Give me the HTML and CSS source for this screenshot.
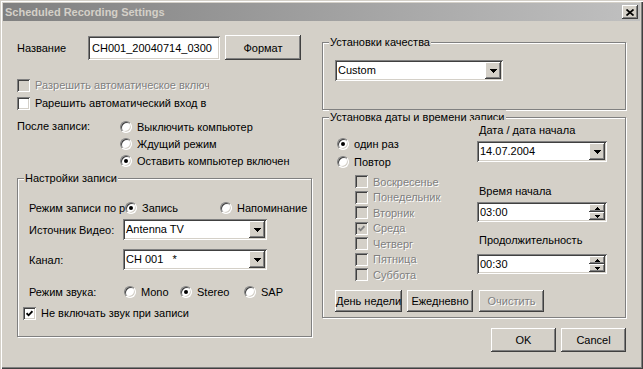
FILE: index.html
```html
<!DOCTYPE html>
<html lang="ru">
<head>
<meta charset="utf-8">
<title>Scheduled Recording Settings</title>
<link rel="stylesheet" href="styles.css">
</head>
<body>
<div class="window">
  <div class="titlebar">
    <span class="title">Scheduled Recording Settings</span>
    <span class="close raised"><svg width="8" height="7" viewBox="0 0 8 7"><path d="M0.5 0.5 L7.5 6.5 M7.5 0.5 L0.5 6.5" stroke="#000" stroke-width="1.7" fill="none"/></svg></span>
  </div>
  <div class="content">
    <div class="col-left">
      <div class="name-row">
        <span class="name-label">Название</span>
        <div class="field name-field">CH001_20040714_0300</div>
        <div class="btn raised format-btn">Формат</div>
      </div>
      <div class="check disabled first-check"><span class="box"></span><span class="clip auto-clip">Разрешить автоматическое включение</span></div>
      <div class="check second-check"><span class="box"></span><span class="clip auto-clip">Рарешить автоматический вход в</span></div>
      <div class="after">
        <span class="after-label">После записи:</span>
        <div class="after-options">
          <div class="radio"><span class="rb"></span>Выключить компьютер</div>
          <div class="radio"><span class="rb"></span>Ждущий режим</div>
          <div class="radio"><span class="rb on"></span>Оставить компьютер включен</div>
        </div>
      </div>
      <div class="group rec-group">
        <span class="group-title">Настройки записи</span>
        <div class="mode-row">
          <span class="clip mode-label">Режим записи по расписанию</span>
          <div class="radio w95"><span class="rb on"></span>Запись</div>
          <div class="radio"><span class="rb"></span>Напоминание</div>
        </div>
        <div class="combo-row">
          <span class="row-label">Источник Видео:</span>
          <div class="field combo rec-combo"><span class="combo-text">Antenna TV</span><span class="drop raised"><svg width="7" height="4" viewBox="0 0 7 4" shape-rendering="crispEdges"><path d="M0 0h7v1H6v1H5v1H4v1H3V3H2V2H1V1H0z" fill="#000"/></svg></span></div>
        </div>
        <div class="combo-row second-combo">
          <span class="row-label">Канал:</span>
          <div class="field combo rec-combo"><span class="combo-text">CH 001 &nbsp;&nbsp;*</span><span class="drop raised"><svg width="7" height="4" viewBox="0 0 7 4" shape-rendering="crispEdges"><path d="M0 0h7v1H6v1H5v1H4v1H3V3H2V2H1V1H0z" fill="#000"/></svg></span></div>
        </div>
        <div class="sound-row">
          <span class="sound-label">Режим звука:</span>
          <div class="radio w56"><span class="rb"></span>Mono</div>
          <div class="radio w64"><span class="rb on"></span>Stereo</div>
          <div class="radio"><span class="rb"></span>SAP</div>
        </div>
        <div class="check mute"><span class="box"><svg width="7" height="7" viewBox="0 0 7 7"><polyline points="0.6,3.2 2.6,5.3 6.4,1.2" stroke="#000" stroke-width="1.8" fill="none"/></svg></span>Не включать звук при записи</div>
      </div>
    </div>
    <div class="col-right">
      <div class="group quality-group">
        <span class="group-title">Установки качества</span>
        <div class="field combo quality-combo"><span class="combo-text">Custom</span><span class="drop raised"><svg width="7" height="4" viewBox="0 0 7 4" shape-rendering="crispEdges"><path d="M0 0h7v1H6v1H5v1H4v1H3V3H2V2H1V1H0z" fill="#000"/></svg></span></div>
      </div>
      <div class="group date-group">
        <span class="group-title">Установка даты и времени записи</span>
        <div class="date-top">
          <div class="date-left">
            <div class="radio r18"><span class="rb on"></span>один раз</div>
            <div class="radio r18"><span class="rb"></span>Повтор</div>
            <div class="days">
              <div class="check disabled day"><span class="box"></span>Воскресенье</div>
              <div class="check disabled day"><span class="box"></span>Понедельник</div>
              <div class="check disabled day"><span class="box"></span>Вторник</div>
              <div class="check disabled day"><span class="box"><svg width="7" height="7" viewBox="0 0 7 7"><polyline points="0.6,3.2 2.6,5.3 6.4,1.2" stroke="#808080" stroke-width="1.8" fill="none"/></svg></span>Среда</div>
              <div class="check disabled day"><span class="box"></span>Четверг</div>
              <div class="check disabled day"><span class="box"></span>Пятница</div>
              <div class="check disabled day"><span class="box"></span>Суббота</div>
            </div>
          </div>
          <div class="date-right">
            <div class="date-label">Дата / дата начала</div>
            <div class="field combo date-combo"><span class="combo-text">14.07.2004</span><span class="drop raised"><svg width="7" height="4" viewBox="0 0 7 4" shape-rendering="crispEdges"><path d="M0 0h7v1H6v1H5v1H4v1H3V3H2V2H1V1H0z" fill="#000"/></svg></span></div>
            <div class="time-label">Время начала</div>
            <div class="field spin start-spin"><span class="combo-text">03:00</span><span class="spin-btns"><span class="spin-btn raised"><svg width="5" height="3" viewBox="0 0 5 3" shape-rendering="crispEdges"><path d="M2 0h1v1h1v1h1v1H0V2h1V1h1z" fill="#000"/></svg></span><span class="spin-btn raised"><svg width="5" height="3" viewBox="0 0 5 3" shape-rendering="crispEdges"><path d="M0 0h5v1H4v1H3v1H2V2H1V1H0z" fill="#000"/></svg></span></span></div>
            <div class="dur-label">Продолжительность</div>
            <div class="field spin dur-spin"><span class="combo-text">00:30</span><span class="spin-btns"><span class="spin-btn raised"><svg width="5" height="3" viewBox="0 0 5 3" shape-rendering="crispEdges"><path d="M2 0h1v1h1v1h1v1H0V2h1V1h1z" fill="#000"/></svg></span><span class="spin-btn raised"><svg width="5" height="3" viewBox="0 0 5 3" shape-rendering="crispEdges"><path d="M0 0h5v1H4v1H3v1H2V2H1V1H0z" fill="#000"/></svg></span></span></div>
          </div>
        </div>
        <div class="day-buttons">
          <div class="btn raised b-week">День недели</div>
          <div class="btn raised b-daily">Ежедневно</div>
          <div class="btn raised b-clear disabled-text">Очистить</div>
        </div>
      </div>
      <div class="dialog-buttons">
        <div class="btn raised b-main">OK</div>
        <div class="btn raised b-main">Cancel</div>
      </div>
    </div>
  </div>
</div>
</body>
</html>
```

FILE: styles.css
```css
* { box-sizing: border-box; }
html, body { margin: 0; padding: 0; }
body {
  width: 643px; height: 369px; overflow: hidden;
  background: #d4d0c8;
  font-family: "Liberation Sans", Arial, sans-serif;
  font-size: 11px; color: #000;
}
.window {
  width: 643px; height: 369px; padding: 3px;
  background: #d4d0c8;
  box-shadow: inset 1px 1px 0 #d4d0c8, inset 2px 2px 0 #fff, inset -1px -1px 0 #404040, inset -2px -2px 0 #808080;
}
.titlebar {
  height: 18px; display: flex; align-items: center;
  padding: 0 2px 0 2px;
  background: linear-gradient(90deg, #808080, #c0c0c0);
}
.title { font-weight: bold; color: #d4d0c8; margin-left: 0; }
.close {
  margin-left: auto; width: 16px; height: 14px;
  display: flex; align-items: center; justify-content: center;
}
.raised {
  background: #d4d0c8;
  box-shadow: inset -1px -1px 0 #404040, inset 1px 1px 0 #fff, inset -2px -2px 0 #808080, inset 2px 2px 0 #d4d0c8;
}
.field {
  background: #fff;
  box-shadow: inset 1px 1px 0 #808080, inset -1px -1px 0 #fff, inset 2px 2px 0 #404040, inset -2px -2px 0 #d4d0c8;
}
.btn {
  display: flex; align-items: center; justify-content: center;
  white-space: nowrap; overflow: hidden;
}
.disabled-text, .disabled { color: #808080; text-shadow: 1px 1px 0 #fff; }

.content { display: flex; gap: 10px; padding: 14px 14px 0 14px; }
.col-left { width: 295px; flex: none; }
.col-right { width: 304px; flex: none; padding-top: 7px; }

.name-row { display: flex; align-items: center; height: 25px; }
.name-label { width: 71px; }
.name-field { width: 132px; height: 24px; line-height: 24px; padding: 0 4px; }
.format-btn { width: 76px; height: 25px; margin-left: 5px; }

.check { display: flex; align-items: center; height: 16px; white-space: nowrap; }
.box {
  width: 13px; height: 13px; flex: none; margin-right: 5px;
  display: flex; align-items: center; justify-content: center;
  background: #fff;
  box-shadow: inset 1px 1px 0 #808080, inset -1px -1px 0 #fff, inset 2px 2px 0 #404040, inset -2px -2px 0 #d4d0c8;
}
.disabled .box { background: #d4d0c8; }
.first-check { margin-top: 17px; }
.second-check { margin-top: 2px; }
.clip { white-space: nowrap; overflow: hidden; display: block; }
.auto-clip { width: 174px; }

.after { display: flex; margin-top: 7px; }
.after-label { width: 103px; line-height: 17px; }
.radio { display: flex; align-items: center; height: 17px; white-space: nowrap; }
.rb {
  width: 12px; height: 12px; flex: none; border-radius: 50%;
  margin-right: 5px; position: relative;
  border: 1px solid; border-color: #808080 #fff #fff #808080;
  background: #fff;
  box-shadow: inset 1px 1px 0 #404040, inset -1px -1px 0 #d4d0c8;
}
.rb.on::after {
  content: ""; position: absolute; left: 3px; top: 3px;
  width: 4px; height: 4px; border-radius: 50%; background: #000;
}

.group {
  position: relative;
  border: 1px solid #808080;
  box-shadow: 1px 1px 0 #fff, inset 1px 1px 0 #fff;
}
.group-title {
  position: absolute; top: -8px; left: 6px;
  padding: 0 1px; line-height: 14px; background: #d4d0c8;
  white-space: nowrap;
}
.rec-group { margin-top: 9px; height: 159px; padding: 21px 0 0 11px; }
.mode-row { display: flex; align-items: center; height: 16px; }
.mode-label { width: 96px; }
.w95 { width: 95px; }
.w56 { width: 56px; }
.w64 { width: 64px; }
.combo-row { display: flex; align-items: center; height: 21px; margin-top: 3px; }
.second-combo { margin-top: 9px; }
.row-label { width: 94px; }
.combo { display: flex; align-items: stretch; height: 21px; padding: 2px; }
.combo-text { flex: 1; padding-left: 1px; line-height: 17px; white-space: pre; }
.drop { width: 16px; height: 17px; display: flex; align-items: center; justify-content: center; }
.rec-combo { width: 144px; }
.sound-row { display: flex; align-items: center; height: 16px; margin-top: 14px; }
.sound-label { width: 95px; }
.mute { margin-top: 5px; margin-left: -6px; }

.quality-group { height: 68px; padding: 17px 0 0 12px; }
.quality-combo { width: 168px; }

.date-group { margin-top: 7px; height: 201px; padding: 3px 0 0 12px; }
.date-top { display: flex; }
.date-left { width: 142px; height: 162px; padding: 14px 0 0 2px; }
.r18 { height: 18px; }
.days { margin: 3px 0 0 18px; }
.day { height: 15.5px; }
.date-right { width: 130px; }
.date-label {
  position: relative; z-index: 1; background: #d4d0c8;
  height: 21px; line-height: 21px; margin-top: -1px; padding-left: 2px;
  margin-left: -6px; padding-left: 8px; width: 136px;
}
.date-combo { width: 130px; }
.time-label { margin-top: 21px; height: 16px; line-height: 16px; padding-left: 2px; }
.spin { display: flex; align-items: stretch; width: 130px; height: 20px; padding: 2px; }
.start-spin { margin-top: 3px; }
.dur-label { margin-top: 10px; height: 16px; line-height: 16px; padding-left: 2px; }
.dur-spin { margin-top: 6px; }
.spin .combo-text { line-height: 16px; }
.spin-btns { display: flex; flex-direction: column; width: 16px; }
.spin-btn { flex: 1; display: flex; align-items: center; justify-content: center; }

.day-buttons { display: flex; margin-top: 7px; height: 22px; }
.b-week { width: 67px; }
.b-daily { width: 66px; margin-left: 5px; }
.b-clear { width: 65px; margin-left: 6px; }

.dialog-buttons { display: flex; justify-content: flex-end; gap: 5px; margin-top: 10px; }
.b-main { width: 65px; height: 24px; }
```
